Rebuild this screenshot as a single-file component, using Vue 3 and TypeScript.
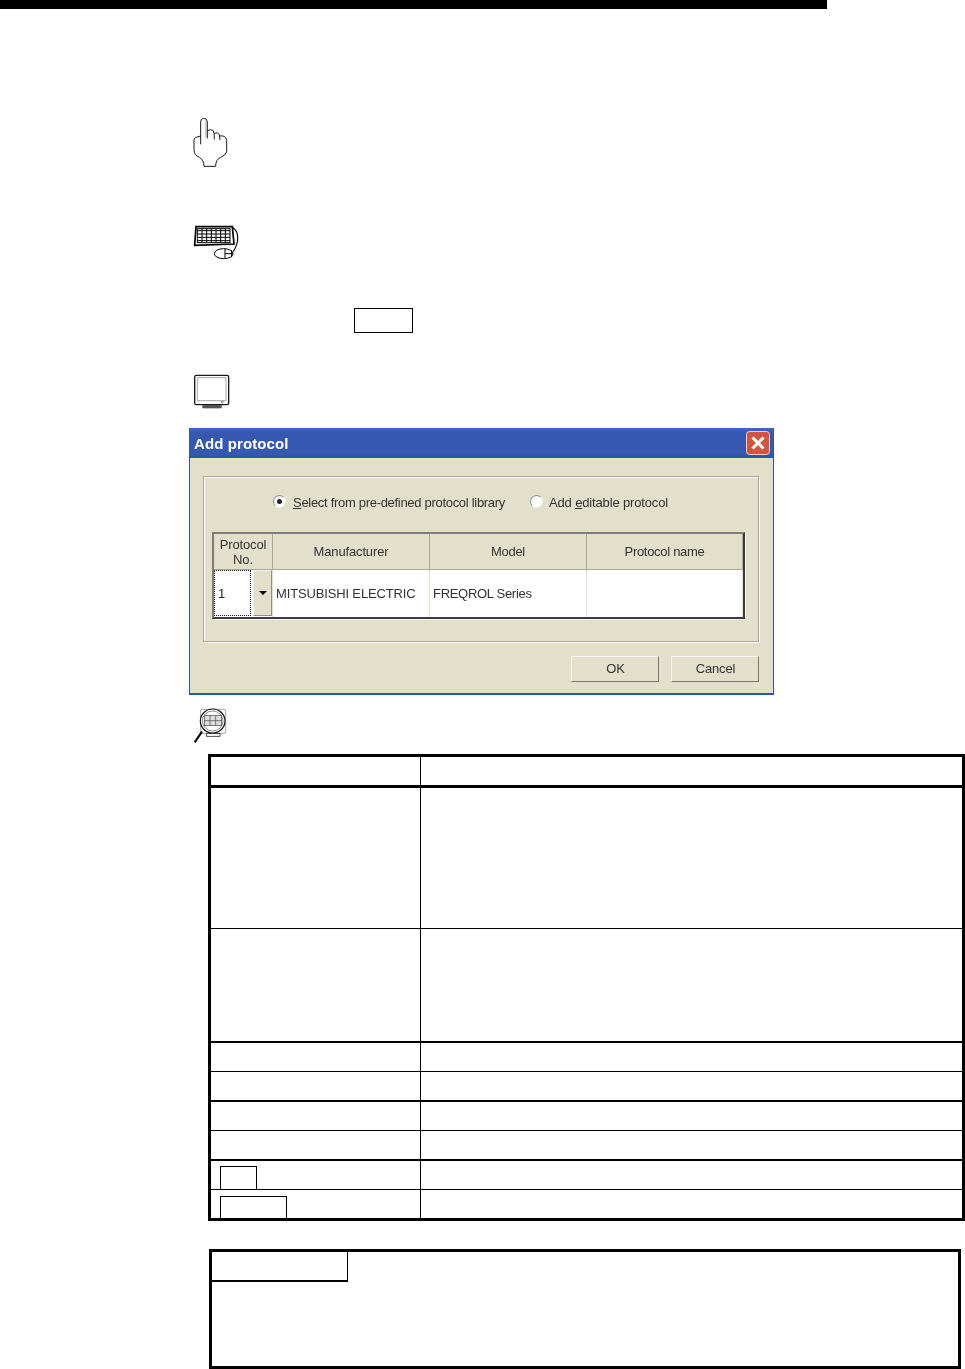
<script setup lang="ts">
// Manual page: hand / keyboard / monitor markers, the Add protocol dialog, then the blank item table.

type TableRow = { height: number; rule: 'outer' | 'thick' | 'thin'; key?: 'ok' | 'cancel' };

const rows: TableRow[] = [
  { height: 28, rule: 'outer' },
  { height: 140, rule: 'thick' },
  { height: 112, rule: 'thin' },
  { height: 28, rule: 'thick' },
  { height: 28, rule: 'thin' },
  { height: 28, rule: 'thick' },
  { height: 28, rule: 'thin' },
  { height: 28, rule: 'thick', key: 'ok' },
  { height: 28, rule: 'thin', key: 'cancel' },
];

const gridHeaders = ['Manufacturer', 'Model', 'Protocol name'];

const keyboardRows = [392, 402, 412, 422];
const keyboardCols = [66, 80, 94, 108, 122, 136];
</script>

<template>
  <div class="page">
    <div class="top-bar" />

    <svg class="icon hand" width="36" height="51" viewBox="39 51 108 153" fill="none" stroke="#1a1a1a" stroke-width="3">
      <path d="M77 62 V112" stroke="#ccc" stroke-width="5" />
      <path d="M62 133 V66 Q62 55 71 55 Q82 55 82 66 V115" />
      <path d="M82 92 Q92 86 100 92 Q103 96 103 118" />
      <path d="M103 100 Q112 95 118 103 L120 120" />
      <path d="M120 108 Q138 105 140 122 V155 Q138 165 122 172 Q107 178 107 199 H72 Q72 180 58 172 Q42 165 42 150 V120 Q42 112 62 108" />
    </svg>

    <svg class="icon keyboard" width="48" height="36" viewBox="39 375 144 108" fill="none" stroke="#000" stroke-width="3">
      <path d="M48 380 H157 L162 432 L44 436 Z" fill="#fff" stroke-width="5" />
      <rect x="52" y="386" width="98" height="42" fill="#fff" stroke-width="3" />
      <path v-for="y in keyboardRows" :key="y" :d="`M52 ${y} H150`" stroke-width="3" />
      <path v-for="x in keyboardCols" :key="x" :d="`M${x} 386 V428`" stroke-width="3" />
      <path d="M157 382 C178 395 178 425 160 455" stroke-width="3.5" />
      <ellipse cx="131" cy="461" rx="28" ry="15" fill="#fff" stroke-width="3" />
      <path d="M135 446 V476 M155 450 V472 M135 461 H158" stroke-width="3" />
    </svg>

    <div class="key-box" />

    <svg class="icon monitor" width="38" height="36" viewBox="39 822 114 108" fill="none">
      <rect x="44" y="826" width="102" height="88" rx="5" fill="#fff" stroke="#1a1a1a" stroke-width="4" />
      <rect x="52" y="833" width="86" height="69" fill="#fff" stroke="#aaa" stroke-width="3" />
      <circle cx="127" cy="906" r="3" stroke="#666" stroke-width="2" />
      <rect x="67" y="915" width="58" height="10" fill="#555" />
    </svg>

    <section class="dialog">
      <header class="title-bar">
        <span class="title">Add protocol</span>
        <svg class="close" width="24" height="24" viewBox="0 0 24 24">
          <rect x="0.5" y="0.5" width="23" height="23" rx="3" fill="#d4553f" stroke="#e9d5cf" />
          <path d="M6.5 6.5 L17.5 17.5 M17.5 6.5 L6.5 17.5" stroke="#fff" stroke-width="3" />
        </svg>
      </header>

      <div class="dialog-body">
        <div class="group">
          <div class="radios">
            <span class="radio on"><i /></span>
            <span class="radio-label first tight"><u>S</u>elect from pre-defined protocol library</span>
            <span class="radio" />
            <span class="radio-label">Add <u>e</u>ditable protocol</span>
          </div>

          <div class="grid">
            <div class="head no">Protocol<br />No.</div>
            <div v-for="h in gridHeaders" :key="h" class="head" :class="{ tight: h !== 'Manufacturer' }">{{ h }}</div>

            <div class="cell combo">
              <span class="combo-value">1</span>
              <span class="combo-btn"><i /></span>
            </div>
            <div class="cell">MITSUBISHI ELECTRIC</div>
            <div class="cell tight">FREQROL Series</div>
            <div class="cell" />
          </div>
        </div>

        <div class="buttons">
          <button class="btn">OK</button>
          <button class="btn">Cancel</button>
        </div>
      </div>
    </section>

    <svg class="icon lens" width="36" height="37" viewBox="24 261 108 111" fill="none">
      <rect x="47" y="268" width="75" height="72" rx="5" stroke="#777" stroke-width="2" />
      <rect x="65" y="340" width="40" height="9" stroke="#333" stroke-width="2.5" />
      <ellipse cx="83" cy="303" rx="37" ry="36" fill="#fff" stroke="#111" stroke-width="3.5" />
      <ellipse cx="83" cy="303" rx="31" ry="30" stroke="#555" stroke-width="2" />
      <rect x="58" y="287" width="52" height="30" fill="#ddd" stroke="#444" stroke-width="2" />
      <path d="M58 302 H110 M75 287 V317 M92 287 V317" stroke="#444" stroke-width="2" />
      <path d="M51 335 L29 367" stroke="#000" stroke-width="6" />
    </svg>

    <div class="table">
      <div
        v-for="(row, i) in rows"
        :key="i"
        class="row"
        :class="row.rule"
        :style="{ height: `${row.height}px` }"
      >
        <div class="left">
          <span v-if="row.key" class="small-key" :class="row.key" />
        </div>
        <div class="right" />
      </div>
    </div>

    <div class="note">
      <div class="note-tab" />
    </div>
  </div>
</template>

<style scoped>
.page {
  display: flex;
  flex-direction: column;
  align-items: flex-start;
  width: 965px;
  height: 1369px;
  background: #fff;
  overflow: hidden;
}

.top-bar {
  width: 827px;
  height: 9px;
  background: #000;
}

.icon {
  display: block;
  margin-left: 193px;
}

.hand {
  margin-top: 108px;
}

.keyboard {
  margin-top: 57px;
}

.key-box {
  box-sizing: border-box;
  width: 59px;
  height: 25px;
  margin: 47px 0 0 354px;
  border: 1px solid #000;
}

.monitor {
  margin-top: 41px;
}

.dialog {
  box-sizing: border-box;
  width: 585px;
  height: 267px;
  margin: 18px 0 0 189px;
  background: #e2e0ca;
  border: solid #2f52ad;
  border-width: 0 1px 2px;
  font-family: "Liberation Sans", Arial, sans-serif;
  font-size: 13px;
  letter-spacing: -0.15px;
  color: #333;
  filter: blur(0.3px);
}

.tight {
  letter-spacing: -0.3px;
}

.title-bar {
  display: flex;
  align-items: center;
  justify-content: space-between;
  height: 30px;
  padding: 0 3px 0 4px;
  background: linear-gradient(#3f69c0, #3559b2 15%, #3559b2 85%, #2f52ad);
}

.title {
  color: #fff;
  font-weight: 700;
  font-size: 15px;
  letter-spacing: 0.1px;
}

.dialog-body {
  padding: 18px 14px 0 13px;
}

.group {
  box-sizing: border-box;
  height: 166px;
  padding: 0 14px 0 8px;
  border: 1px solid #aca899;
  box-shadow: 1px 1px 0 #fff, inset 1px 1px 0 #fff;
}

.radios {
  display: flex;
  align-items: center;
  height: 26px;
  margin: 11px 0 18px;
  padding-left: 61px;
}

.radio {
  box-sizing: border-box;
  display: flex;
  align-items: center;
  justify-content: center;
  width: 13px;
  height: 13px;
  border-radius: 50%;
  background: #fff;
  border: 1px solid;
  border-color: #8f8f86 #f4f4ea #f4f4ea #8f8f86;
}

.radio i {
  width: 5px;
  height: 5px;
  border-radius: 50%;
  background: #222;
}

.radio-label {
  margin: 2px 0 0 6px;
}

.radio-label.first {
  margin-left: 7px;
  margin-right: 25px;
}

.grid {
  display: grid;
  grid-template-columns: 59px 157px 157px 1fr;
  grid-template-rows: 36px 47px;
  box-sizing: border-box;
  width: 533px;
  height: 87px;
  border: 2px solid;
  border-color: #7d7d75 #3c3c3c #3c3c3c #7d7d75;
  box-shadow: 1px 1px 0 #f4f4ea;
}

.head {
  display: flex;
  align-items: center;
  justify-content: center;
  box-sizing: border-box;
  text-align: center;
  border-right: 1px solid #a9a795;
  border-bottom: 1px solid #a9a795;
  line-height: 15px;
}

.cell {
  display: flex;
  align-items: center;
  box-sizing: border-box;
  padding-left: 3px;
  background: #fff;
  border-right: 1px solid #e2e0ca;
}

.cell.combo {
  align-items: stretch;
  padding: 0;
}

.combo-value {
  display: flex;
  align-items: center;
  box-sizing: border-box;
  width: 37px;
  height: 46px;
  padding-left: 3px;
  border: 1px dotted #222;
  color: #222;
}

.combo-btn {
  display: flex;
  align-items: center;
  justify-content: center;
  box-sizing: border-box;
  width: 19px;
  height: 46px;
  margin-left: 2px;
  background: #e2e0ca;
  border: 1px solid;
  border-color: #f4f4ea #8f8f86 #8f8f86 #f4f4ea;
}

.combo-btn i {
  width: 0;
  height: 0;
  border: 4px solid transparent;
  border-top-color: #000;
  border-bottom-width: 0;
}

.buttons {
  display: flex;
  justify-content: flex-end;
  gap: 12px;
  margin-top: 14px;
}

.btn {
  box-sizing: border-box;
  width: 88px;
  height: 26px;
  padding: 0 0 2px 1px;
  background: #e2e0ca;
  border: 1px solid;
  border-color: #f6f6ee #77776c #77776c #f6f6ee;
  font: inherit;
  letter-spacing: inherit;
  color: inherit;
}

.lens {
  margin-top: 12px;
}

.table {
  box-sizing: border-box;
  width: 757px;
  margin: 10px 0 0 208px;
  border: solid #000;
  border-width: 0 3px 3px;
}

.row {
  display: grid;
  grid-template-columns: 209px 1fr;
  border-top: 1px solid #000;
}

.row.thick {
  border-top-width: 2px;
}

.row.outer {
  border-top-width: 3px;
}

.row .right {
  border-left: 1px solid #000;
}

/* first data row sits under a 3px rule */
.row:nth-child(2) {
  border-top-width: 3px;
}

.small-key {
  display: block;
  box-sizing: border-box;
  margin-left: 9px;
  border: 1px solid #000;
}

.small-key.ok {
  width: 37px;
  height: 24px;
  margin-top: 5px;
}

.small-key.cancel {
  width: 67px;
  height: 23px;
  margin-top: 6px;
}

.note {
  box-sizing: border-box;
  width: 752px;
  height: 120px;
  margin: 28px 0 0 209px;
  border: 3px solid #000;
}

.note-tab {
  box-sizing: border-box;
  width: 136px;
  height: 30px;
  border: solid #000;
  border-width: 0 1px 2px 0;
}
</style>

<style>
html,
body {
  margin: 0;
  background: #fff;
}
</style>
